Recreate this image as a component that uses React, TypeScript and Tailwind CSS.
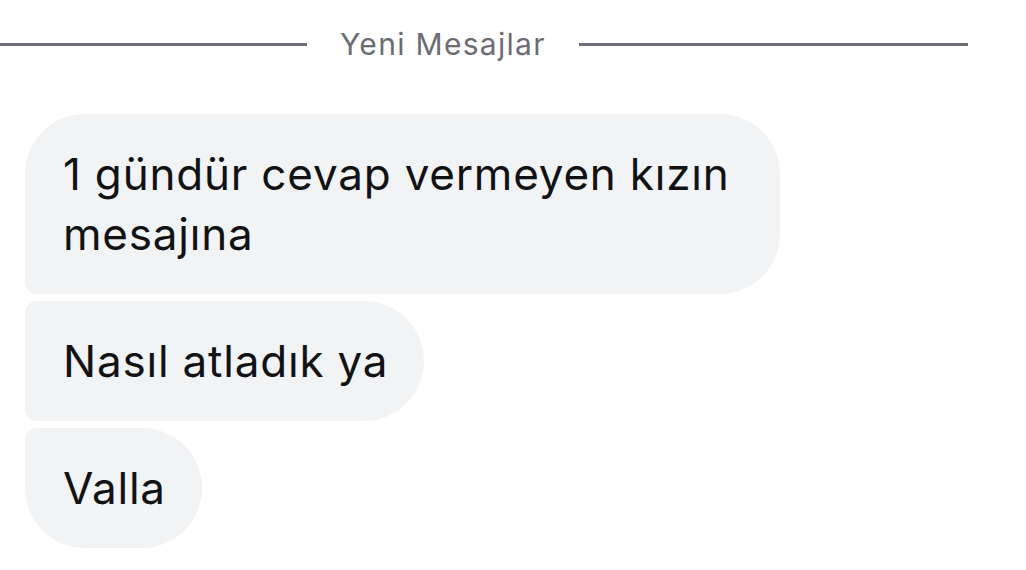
const messages = [
    { text: '1 gündür cevap vermeyen kızın mesajına', shape: 'rounded-tl-[60px] rounded-bl-[12px] rounded-r-[60px]' },
    { text: 'Nasıl atladık ya', shape: 'rounded-l-[12px] rounded-r-[60px]' },
    { text: 'Valla', shape: 'rounded-tl-[12px] rounded-bl-[60px] rounded-r-[60px]' },
];

const App = () => {
    return (
        <div className="w-[1026px] h-[570px] bg-white overflow-hidden font-['Inter','Noto_Sans',sans-serif]">
            {/* ayırıcı */}
            <div className="flex items-center gap-[33px] w-[968px] h-[36px] mt-[26px]">
                <div className="w-[307px] h-[3px] bg-[#6f6f77]" />
                <span className="text-[30px] leading-none tracking-[1.3px] text-[#6c6c74] whitespace-nowrap">
                    Yeni Mesajlar
                </span>
                <div className="flex-1 h-[3px] bg-[#6f6f77]" />
            </div>

            <div className="flex flex-col items-start gap-[7px] mt-[52px] pl-[25px]">
                {messages.map((m) => (
                    <div
                        key={m.text}
                        className={`bg-[#f2f3f5] text-[#111214] text-[44px] leading-[60px] tracking-[0.8px] pl-[38px] pr-[36px] py-[30px] max-w-[755px] ${m.shape}`}
                    >
                        {m.text}
                    </div>
                ))}
            </div>
        </div>
    );
};

export default App;
